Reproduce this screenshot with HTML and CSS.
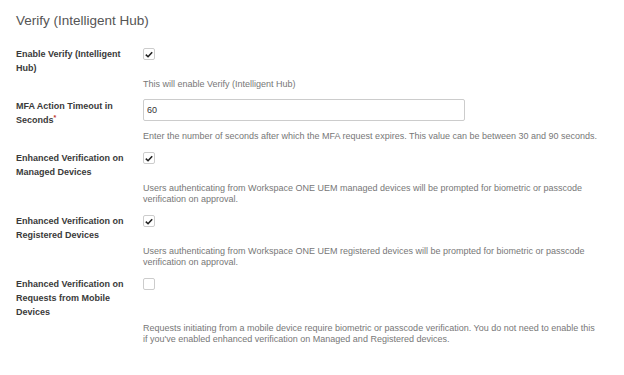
FILE: index.html
```html
<!DOCTYPE html>
<html lang="en">
<head>
  <meta charset="UTF-8" />
  <title>Verify (Intelligent Hub)</title>
  <link rel="stylesheet" href="styles.css">
</head>
<body>

<div class="page">
  <h2 class="title">Verify (Intelligent Hub)</h2>

  <!-- Enable Verify -->
  <div class="field">
    <div class="row">
      <label class="label">Enable Verify (Intelligent Hub)</label>
      <div class="control">
        <span class="check on">
          <svg viewBox="0 0 10 8" width="8" height="7"><path d="M1 4.2 L3.8 6.8 L9 1.2" fill="none" stroke="#222" stroke-width="2"/></svg>
        </span>
      </div>
    </div>
    <p class="help">This will enable Verify (Intelligent Hub)</p>
  </div>

  <!-- Timeout -->
  <div class="field">
    <div class="row">
      <label class="label">MFA Action Timeout in Seconds<span class="req">*</span></label>
      <div class="control">
        <input class="input" type="text" value="60">
      </div>
    </div>
    <p class="help">Enter the number of seconds after which the MFA request expires. This value can be between 30 and 90 seconds.</p>
  </div>

  <!-- Managed -->
  <div class="field">
    <div class="row">
      <label class="label">Enhanced Verification on Managed Devices</label>
      <div class="control">
        <span class="check on">
          <svg viewBox="0 0 10 8" width="8" height="7"><path d="M1 4.2 L3.8 6.8 L9 1.2" fill="none" stroke="#222" stroke-width="2"/></svg>
        </span>
      </div>
    </div>
    <p class="help">Users authenticating from Workspace ONE UEM managed devices will be prompted for biometric or passcode verification on approval.</p>
  </div>

  <!-- Registered -->
  <div class="field">
    <div class="row">
      <label class="label">Enhanced Verification on Registered Devices</label>
      <div class="control">
        <span class="check on">
          <svg viewBox="0 0 10 8" width="8" height="7"><path d="M1 4.2 L3.8 6.8 L9 1.2" fill="none" stroke="#222" stroke-width="2"/></svg>
        </span>
      </div>
    </div>
    <p class="help">Users authenticating from Workspace ONE UEM registered devices will be prompted for biometric or passcode verification on approval.</p>
  </div>

  <!-- Mobile -->
  <div class="field">
    <div class="row">
      <label class="label">Enhanced Verification on Requests from Mobile Devices</label>
      <div class="control">
        <span class="check"></span>
      </div>
    </div>
    <p class="help">Requests initiating from a mobile device require biometric or passcode verification. You do not need to enable this if you've enabled enhanced verification on Managed and Registered devices.</p>
  </div>
</div>

</body>
</html>
```

FILE: styles.css
```css
* {
  margin: 0;
  padding: 0;
  box-sizing: border-box;
}

body {
  font-family: 'Liberation Sans', Arial, sans-serif;
  background: #fff;
  color: #333;
}

.page {
  padding: 13px 16px 0 16px;
}

.title {
  font-size: 13.5px;
  font-weight: normal;
  color: #555;
  line-height: 16px;
  margin-bottom: 18px;
}

.field {
  margin-bottom: 9px;
}

.row {
  display: grid;
  grid-template-columns: 127px 1fr;
}

.label {
  font-size: 9px;
  font-weight: bold;
  line-height: 14px;
  color: #3a3a3a;
  padding-right: 10px;
}

.req {
  color: #c0392b;
  font-size: 7px;
  vertical-align: top;
  line-height: 10px;
}

.control {
  display: flex;
  align-items: flex-start;
}

.check {
  display: inline-flex;
  align-items: center;
  justify-content: center;
  width: 12px;
  height: 12px;
  margin-top: 1px;
  border: 1px solid #ccc;
  border-radius: 2px;
  background: #fff;
}

.input {
  width: 322px;
  height: 22px;
  border: 1px solid #ccc;
  border-radius: 2px;
  padding: 0 3px;
  font-family: inherit;
  font-size: 9px;
  color: #333;
  outline: none;
}

.help {
  margin: 4px 0 0 127px;
  font-size: 9px;
  line-height: 11px;
  color: #777;
  max-width: 458px;
}
```
